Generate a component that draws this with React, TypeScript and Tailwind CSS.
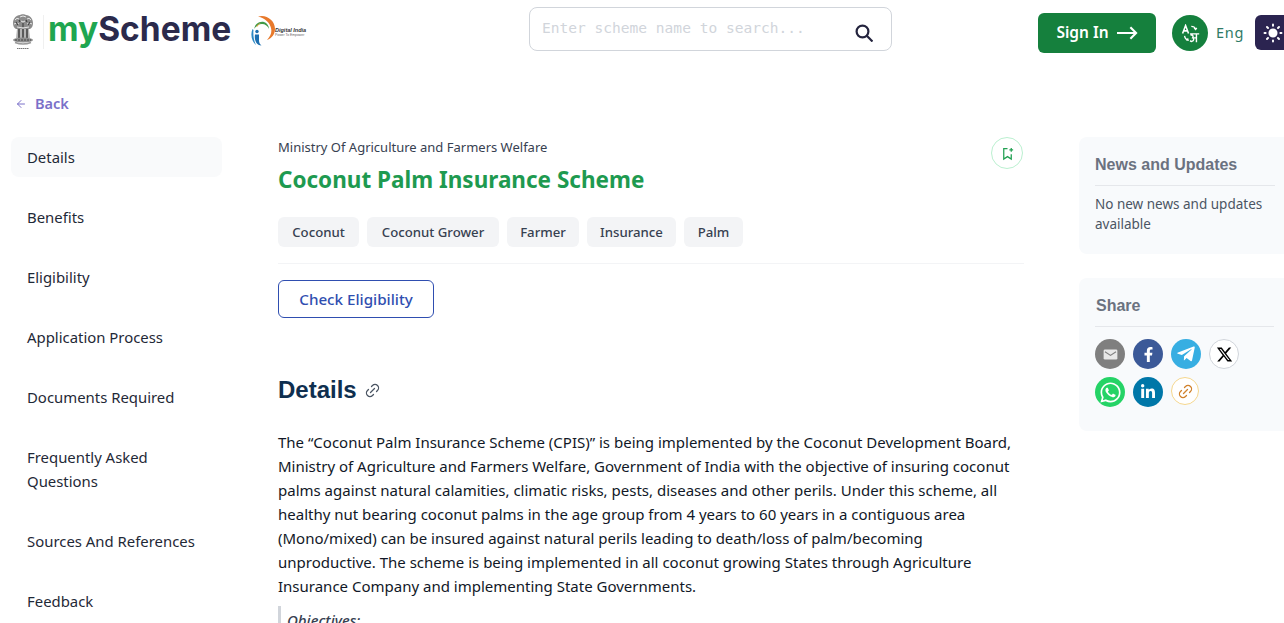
import React from 'react';
import { ArrowLeft, Link2 } from 'lucide-react';
import { FaFacebookF, FaTelegramPlane, FaWhatsapp, FaLinkedinIn } from 'react-icons/fa';
import { FaXTwitter } from 'react-icons/fa6';

const NAV_ITEMS = ['Details', 'Benefits', 'Eligibility', 'Application Process', 'Documents Required', 'Frequently Asked Questions', 'Sources And References', 'Feedback'];
const TAGS = [
  { label: 'Coconut', width: 'w-[81px]' },
  { label: 'Coconut Grower', width: 'w-[132px]' },
  { label: 'Farmer', width: 'w-[72px]' },
  { label: 'Insurance', width: 'w-[89px]' },
  { label: 'Palm', width: 'w-[59px]' },
];

const Emblem = () => (
  <svg viewBox="0 0 24 36" className="w-[24px] h-[36px]">
    {/* lion heads */}
    <path d="M2 9c0-4 3-8 7-8 1-1 5-1 6 0 4 0 7 4 7 8 0 3-1 5-3 6H5c-2-1-3-3-3-6z" fill="#8c8c8c" />
    <path d="M4 6q2-3 4-1M9 3q3-2 6 0M16 5q2-2 4 1M3 10q3-2 5 0M10 7q2 2 4 0M16 10q3-2 5 0M6 13q6 2 12 0" stroke="#e6e6e6" strokeWidth="1" fill="none" />
    <path d="M5 8l2 3M12 9v4M19 8l-2 3M8 6l1 2M15 6l1 2" stroke="#3d3d3d" strokeWidth="1.100" fill="none" />
    {/* body */}
    <path d="M6 15h12l1 9H5z" fill="#b5b5b5" />
    <path d="M8 15v9M12 15v9M16 15v9" stroke="#3c3c3c" strokeWidth="1.500" />
    {/* abacus */}
    <ellipse cx="12" cy="26" rx="10" ry="2.600" fill="#8f8f8f" />
    <path d="M4 26h16" stroke="#444" strokeWidth="1" strokeDasharray="2 1" />
    <path d="M4 28.500q8 3 16 0" stroke="#9a9a9a" strokeWidth="1.600" fill="none" />
    <path d="M6 34.500h12" stroke="#777" strokeWidth="1" strokeDasharray="1.500 .5" />
  </svg>
);

const DigitalIndia = () => (
  <div className="flex items-center ml-[5px] -mt-[2px]">
    <svg viewBox="0 0 25 32" className="w-[25px] h-[32px] shrink-0">
      <path d="M7 1.500C15-1 24 5 24 14c0 5-3 9-8 11 4-4 5-8 4-12-1-5-6-10-13-11.500z" fill="#e8792b" />
      <path d="M3 14C4 9 8 6 13 7c3 1 5 4 5 7-1-3-4-5-7-5-3 0-6 2-8 5z" fill="#3f9a48" />
      <path d="M5.500 11.500C6 10 8 8 10 8c-2 1-3 2.500-4 4z" fill="#e8a23c" />
      <circle cx="6" cy="16.500" r="1.700" fill="#1c6fb0" />
      <path d="M4 19.500h4v6c0 2 1 4 2.500 5C6 30.500 3 26 4 19.500z" fill="#1c6fb0" />
      <path d="M1.500 14C-1 20 1 27 5 30 2.500 25 2 19 2.500 15z" fill="#2b88c4" />
    </svg>
    <div className="flex flex-col font-['Liberation_Sans',sans-serif] leading-none -ml-[1px] mt-[3px] whitespace-nowrap">
      <span className="text-[5.500px] font-bold italic text-[#333]">Digital India</span>
      <span className="text-[3.400px] text-[#666] mt-[1px]">Power To Empower</span>
    </div>
  </div>
);

const LangIcon = () => (
  <svg viewBox="0 0 24 24" className="w-[19px] h-[19px]" fill="none" stroke="#fff" strokeWidth="2">
    <path d="M2 12 5.800 2 9.500 12M3.300 8.700h5" />
    <path d="M13 3c2.500 0 4.500 1 5.500 3.500M16.500 5l2 2 1.500-2.200" strokeWidth="1.500" />
    <path d="M4.500 15c.3 2.500 1.800 4.500 4 5.200M6.500 20l2.500.5-.5-2.500" strokeWidth="1.500" />
    <path d="M11.500 12.500H23M19.500 12.500V23M19.500 17.500h-4.700M12 14c3-.5 4 1.500 2.700 3.500 2 .5 1.800 4-1 4.500-1 0-1.700-.5-2.200-1" strokeWidth="1.800" />
  </svg>
);

const SunIcon = () => (
  <svg viewBox="0 0 24 24" className="w-[20px] h-[20px]" fill="#fff" stroke="#fff" strokeWidth="2.300" strokeLinecap="round">
    <circle cx="12" cy="12" r="4.300" />
    <path d="M12 1.800v1.400M12 20.800v1.400M1.800 12h1.400M20.800 12h1.400M4.800 4.800l1.200 1.200M18 18l1.200 1.200M4.800 19.200 6 18M18 6l1.200-1.200" />
  </svg>
);

const BookmarkIcon = () => (
  <svg viewBox="0 0 24 24" className="w-[15px] h-[15px]" fill="none" stroke="#22a052" strokeWidth="2">
    <path d="M12 4H6v17l6-4 6 4v-8" />
    <path d="M18 3v6M15 6h6" />
  </svg>
);

const SearchIcon = () => (
  <svg viewBox="0 0 18 18" className="w-[18px] h-[18px]" fill="none" stroke="#24243e" strokeWidth="2.200">
    <circle cx="7.500" cy="7.500" r="5.900" />
    <path d="M11.800 11.800 17.500 17.500" />
  </svg>
);

const ShareCircle = ({ className, children }: { className: string; children: React.ReactNode }) => (
  <div className={`rounded-full flex items-center justify-center ${className}`}>{children}</div>
);

const MailIcon = () => (
  <svg viewBox="0 0 16 12" className="w-[15px] h-[11px]">
    <rect x="0.500" y="0.500" width="15" height="11" rx="1.500" fill="#e8e8e8" />
    <path d="M2 3l6 4 6-4" stroke="#7f7f7f" strokeWidth="1.200" fill="none" />
  </svg>
);

const App: React.FC = () => {
  return (
    <div className="w-[1284px] h-[623px] overflow-hidden bg-white font-['Noto_Sans',sans-serif] text-[#111827]">
      {/* Header */}
      <header className="h-[60px] flex items-start">
        <div className="w-[529px] shrink-0 pl-[11px] pt-[14px] flex items-center">
          <Emblem />
          <div className="w-px h-[34px] bg-[#f0f0f0] ml-[8px] mr-[4px]" />
          <span className="font-['Inter',sans-serif] font-bold text-[33.500px] leading-[36px] text-[#2b2a4c] w-[198px] -mt-[6px]">
            <span className="text-[#1fa650]">my</span>Scheme
          </span>
          <DigitalIndia />
        </div>
        <div className="mt-[7px] w-[363px] shrink-0 h-[44px] rounded-lg border border-[#d1d5db] flex items-start justify-between pl-[12px] pr-[18px]">
          <span className="font-['DejaVu_Sans_Mono',monospace] text-[14.550px] leading-[40px] text-[#d1d5db]">Enter scheme name to search...</span>
          <div className="mt-[16px]"><SearchIcon /></div>
        </div>
        <div className="ml-[146px] mt-[13px] flex items-center">
          <button className="w-[118px] h-[40px] rounded-md bg-[#15803d] text-white flex items-center justify-center gap-[8px] font-semibold text-[15.500px]">
            Sign In
            <svg viewBox="0 0 22 14" className="w-[21px] h-[14px]" fill="none" stroke="#fff" strokeWidth="2.200"><path d="M0 7h20M14 1l6 6-6 6" /></svg>
          </button>
          <div className="ml-[16px] w-[36px] h-[36px] rounded-full bg-[#15803d] flex items-center justify-center"><LangIcon /></div>
          <span className="ml-[8px] text-[14.500px] tracking-[0.7px] text-[#2f7a66]">Eng</span>
          <div className="ml-[11px] w-[29px] h-[35px] -mt-[1px] rounded-l-md bg-[#2b2450] flex items-center pl-[8px] shrink-0 overflow-hidden"><SunIcon /></div>
        </div>
      </header>

      {/* Back */}
      <div className="mt-[34px] pl-[15px] h-[20px] flex items-center gap-[8px] text-[#7a70c9] font-semibold text-[14.500px]">
        <ArrowLeft className="w-[12px] h-[12px]" strokeWidth={2} />
        <span>Back</span>
      </div>

      <main className="flex mt-[23px] items-start">
        {/* Sidebar */}
        <nav className="w-[211px] ml-[11px] shrink-0 flex flex-col gap-[20px] text-[14.900px] leading-[24px] text-[#1f2937]">
          {NAV_ITEMS.map((item, i) => (
            <div key={item} className={`px-[16px] py-[8px] rounded-lg ${i === 0 ? 'bg-[#f9fafb]' : ''}`}>{item}</div>
          ))}
        </nav>

        {/* Content */}
        <div className="w-[746px] ml-[56px] shrink-0">
          <div className="flex justify-between items-start">
            <div>
              <p className="text-[13px] leading-[20px] text-[#374151]">Ministry Of Agriculture and Farmers Welfare</p>
              <h1 className="mt-[7px] font-bold text-[22.500px] leading-[32px] text-[#1e9a50]">Coconut Palm Insurance Scheme</h1>
            </div>
            <div className="w-[32px] h-[32px] mr-[1px] rounded-full border border-[#bbf0d0] flex items-center justify-center"><BookmarkIcon /></div>
          </div>
          <div className="mt-[21px] flex gap-[8px]">
            {TAGS.map((tag) => (
              <span key={tag.label} className={`h-[30px] rounded-md bg-[#f3f4f6] text-center text-[13.200px] leading-[30px] font-medium text-[#374151] ${tag.width}`}>{tag.label}</span>
            ))}
          </div>
          <div className="mt-[16px] h-px bg-[#f3f4f6]" />
          <button className="mt-[16px] w-[156px] h-[38px] rounded-md border border-[#2f4eb0] text-[#2f4eb0] font-medium text-[15.200px]">Check Eligibility</button>
          <div className="mt-[56px] h-[32px] flex items-center gap-[8px]">
            <h2 className="font-['Liberation_Sans',sans-serif] font-bold text-[24px] leading-[32px] text-[#0f2f4f]">Details</h2>
            <Link2 className="w-[17px] h-[17px] text-[#4b5563] -rotate-45 -ml-[1px]" strokeWidth={1.800} />
          </div>
          <p className="mt-[24px] text-[15px] leading-[24px] text-[#111827] w-[745px]">
            The “Coconut Palm Insurance Scheme (CPIS)” is being implemented by the Coconut Development Board, Ministry of Agriculture and Farmers Welfare, Government of India with the objective of insuring coconut palms against natural calamities, climatic risks, pests, diseases and other perils. Under this scheme, all healthy nut bearing coconut palms in the age group from 4 years to 60 years in a contiguous area (Mono/mixed) can be insured against natural perils leading to death/loss of palm/becoming unproductive. The scheme is being implemented in all coconut growing States through Agriculture Insurance Company and implementing State Governments.
          </p>
          <div className="mt-[8px] border-l-[3px] border-[#d1d5db] pl-[6px] pt-[2px] italic font-medium text-[15px] leading-[24px] text-[#374151]">Objectives:</div>
        </div>

        {/* Right column */}
        <aside className="ml-[55px] w-[240px] shrink-0 flex flex-col gap-[24px]">
          <div className="h-[117px] rounded-lg bg-[#f8fafc] pl-[16px] pt-[16px]">
            <h3 className="font-['Liberation_Sans',sans-serif] font-bold text-[16px] leading-[24px] text-[#6b7280]">News and Updates</h3>
            <div className="mt-[8px] h-px bg-[#e5e7eb] w-[180px]" />
            <p className="mt-[8px] w-[180px] text-[13.500px] leading-[20px] text-[#4b5563]">No new news and updates available</p>
          </div>
          <div className="h-[153px] rounded-lg bg-[#f8fafc] pl-[16px] pt-[16px]">
            <h3 className="font-['Liberation_Sans',sans-serif] font-bold text-[16px] leading-[24px] text-[#6b7280] pl-[1px]">Share</h3>
            <div className="mt-[8px] h-px bg-[#e5e7eb] w-[179px]" />
            <div className="mt-[12px] w-[160px] flex flex-wrap gap-x-[8px] gap-y-[8px]">
              <ShareCircle className="w-[30px] h-[30px] bg-[#7f7f7f]"><MailIcon /></ShareCircle>
              <ShareCircle className="w-[30px] h-[30px] bg-[#3b5998] text-white"><FaFacebookF className="w-[15px] h-[15px]" /></ShareCircle>
              <ShareCircle className="w-[30px] h-[30px] bg-[#37aee2] text-white"><FaTelegramPlane className="w-[20px] h-[20px]" /></ShareCircle>
              <ShareCircle className="w-[30px] h-[30px] bg-white border border-[#d1d5db] text-black"><FaXTwitter className="w-[17px] h-[17px]" /></ShareCircle>
              <ShareCircle className="w-[30px] h-[30px] bg-[#25d366] text-white"><FaWhatsapp className="w-[23px] h-[23px]" /></ShareCircle>
              <ShareCircle className="w-[30px] h-[30px] bg-[#0077a8] text-white"><FaLinkedinIn className="w-[16px] h-[16px]" /></ShareCircle>
              <ShareCircle className="w-[28px] h-[28px] bg-white border border-[#f5d78e] text-[#d0812c]"><Link2 className="w-[17px] h-[17px] -rotate-45" strokeWidth={1.800} /></ShareCircle>
            </div>
          </div>
        </aside>
      </main>
    </div>
  );
};

export default App;
